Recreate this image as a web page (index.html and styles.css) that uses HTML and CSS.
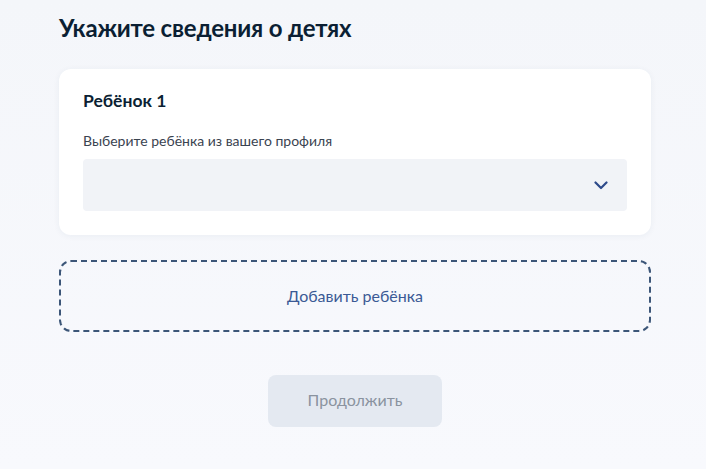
FILE: index.html
```html
<!DOCTYPE html>
<html lang="ru">
<head>
<meta charset="utf-8">
<link rel="stylesheet" href="styles.css">
</head>
<body>
<main class="page">
  <h1 class="title">Укажите сведения о детях</h1>
  <section class="card">
    <h2 class="card-title">Ребёнок 1</h2>
    <label class="label">Выберите ребёнка из вашего профиля</label>
    <div class="select">
      <svg class="chevron" width="14" height="9" viewBox="0 0 14 9"><path d="M1.5 1.5 L7 7 L12.5 1.5" fill="none" stroke="#2d4a8a" stroke-width="2.2" stroke-linecap="round" stroke-linejoin="round"/></svg>
    </div>
  </section>
  <div class="add">Добавить ребёнка</div>
  <div class="actions">
    <button class="btn">Продолжить</button>
  </div>
</main>
</body>
</html>
```
FILE: styles.css
```css
html, body {
  margin: 0;
  padding: 0;
}
body {
  background: linear-gradient(180deg, #f4f6fa 0%, #f8f9fd 100%);
  font-family: Lato, "Noto Sans", sans-serif;
  color: #0b1f33;
  width: 706px;
  height: 469px;
  overflow: hidden;
}
.page {
  width: 592px;
  margin-left: 59px;
  padding-top: 11px;
}
.title {
  margin: 0;
  font-size: 24px;
  line-height: 34px;
  font-weight: 700;
  letter-spacing: -0.2px;
}
.card {
  margin-top: 24px;
  background: #ffffff;
  border-radius: 12px;
  box-shadow: 0 1px 6px rgba(40, 60, 100, 0.06);
  padding: 20px 24px 24px;
}
.card-title {
  margin: 0;
  font-size: 17.5px;
  line-height: 24px;
  font-weight: 700;
}
.label {
  display: block;
  margin-top: 18px;
  font-size: 14px;
  line-height: 20px;
  color: #3a4350;
}
.select {
  margin-top: 8px;
  height: 52px;
  background: #f1f3f7;
  border-radius: 4px;
  display: flex;
  align-items: center;
  justify-content: flex-end;
  padding-right: 19px;
}
.add {
  box-sizing: border-box;
  margin-top: 25px;
  height: 72px;
  padding-bottom: 2px;
  border: 2px dashed #3c5678;
  border-radius: 12px;
  display: flex;
  align-items: center;
  justify-content: center;
  font-size: 16px;
  color: #3b5a95;
}
.actions {
  display: flex;
  justify-content: center;
  margin-top: 43px;
}
.btn {
  width: 174px;
  height: 52px;
  padding: 0 0 3px;
  border: none;
  border-radius: 8px;
  background: #e4e9f1;
  color: #8a939f;
  font-family: Lato, "Noto Sans", sans-serif;
  font-size: 16px;
}
```
